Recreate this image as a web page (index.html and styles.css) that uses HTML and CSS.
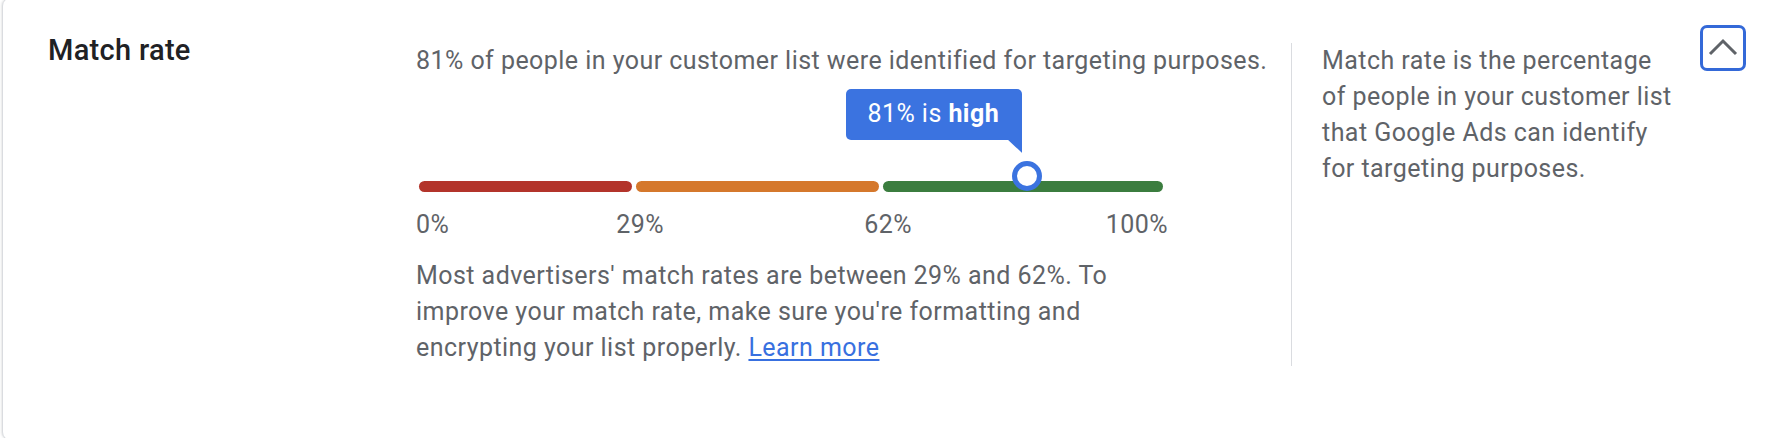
FILE: index.html
```html
<!DOCTYPE html>
<html lang="en">
<head>
<meta charset="utf-8">
<title>Match rate</title>
<link rel="stylesheet" href="styles.css">
</head>
<body>
<section class="card">
  <div class="row">
    <h2 class="title">Match rate</h2>
    <div class="main">
      <p class="lead">81% of people in your customer list were identified for targeting purposes.</p>
      <div class="scale">
        <div class="bar">
          <span class="seg seg-low" style="flex-grow:29"></span>
          <span class="seg seg-mid" style="flex-grow:33"></span>
          <span class="seg seg-high" style="flex-grow:38"></span>
        </div>
        <div class="marker" style="left:81%">
          <div class="tip">81% is <b>high</b></div>
          <span class="knob"></span>
        </div>
      </div>
      <div class="labels">
        <span class="label label-start">0%</span>
        <span class="label label-mid" style="left:29%">29%</span>
        <span class="label label-mid" style="left:62%">62%</span>
        <span class="label label-end">100%</span>
      </div>
      <p class="note">Most advertisers' match rates are between 29% and 62%. To improve your match rate, make sure you're formatting and encrypting your list properly. <a href="#" class="link">Learn more</a></p>
    </div>
    <aside class="side">
      <p class="side-text">Match rate is the percentage of people in your customer list that Google Ads can identify for targeting purposes.</p>
    </aside>
    <button class="toggle" type="button" aria-label="Collapse">
      <svg width="30" height="18" viewBox="0 0 30 18" aria-hidden="true"><polyline points="2,16 15,3 28,16" fill="none" stroke="#5f6368" stroke-width="3"/></svg>
    </button>
  </div>
</section>
</body>
</html>
```
FILE: styles.css
```css
html, body {
  margin: 0;
  padding: 0;
  background: #ffffff;
  overflow: hidden;
}
body {
  width: 1784px;
  height: 438px;
  font-family: Roboto, "Liberation Sans", Arial, sans-serif;
  color: #5f6368;
}
.card {
  box-sizing: border-box;
  margin: -3px 0 0 2px;
  width: 1800px;
  height: 444px;
  border: 1px solid #dadce0;
  border-radius: 9px;
  box-shadow: -1px 0 2px rgba(60, 64, 67, 0.12);
  background: #fff;
  padding: 45px 0 0 45px;
}
.row {
  display: flex;
  align-items: stretch;
}
.title {
  flex: 0 0 368px;
  margin: -11px 0 0 0;
  font-size: 29px;
  line-height: 36px;
  font-weight: 500;
  color: #202124;
  letter-spacing: 0.3px;
}
.main {
  flex: 0 0 875px;
}
.lead, .note, .side-text {
  margin: 0;
  font-size: 25px;
  line-height: 36px;
  letter-spacing: 0.45px;
}
.scale {
  position: relative;
  width: 752px;
  padding-top: 102px;
}
.bar {
  display: flex;
  gap: 4px;
  height: 11px;
  margin: 0 5px 0 3px;
}
.seg {
  flex-basis: 0;
  border-radius: 6px;
}
.seg-low { background: #b3342b; }
.seg-mid { background: #d5782c; }
.seg-high { background: #3b7d3f; }
.marker {
  position: absolute;
  top: 0;
  width: 0;
  height: 100%;
}
.tip {
  position: absolute;
  top: 10px;
  right: 3px;
  white-space: nowrap;
  background: #3b73e0;
  color: #fff;
  font-size: 25px;
  line-height: 36px;
  letter-spacing: 0.45px;
  padding: 7px 23px 8px 21px;
  border-radius: 5px 5px 0 5px;
}
.tip b { font-weight: 700; }
.tip::after {
  content: "";
  position: absolute;
  right: 0;
  top: 100%;
  width: 14px;
  height: 13px;
  background: #3b73e0;
  clip-path: polygon(0 0, 100% 0, 100% 100%);
}
.knob {
  position: absolute;
  top: 82px;
  left: -13px;
  box-sizing: border-box;
  width: 30px;
  height: 30px;
  border: 5px solid #3b73e0;
  border-radius: 50%;
  background: #fff;
}
.labels {
  position: relative;
  width: 752px;
  height: 36px;
  margin-top: 15px;
  font-size: 25px;
  line-height: 36px;
  letter-spacing: 0.45px;
}
.label {
  position: absolute;
  top: 0;
  white-space: nowrap;
}
.label-start { left: 0; }
.label-mid { transform: translateX(-50%); margin-left: 6px; }
.label-end { right: 0; }
.note {
  width: 752px;
  margin-top: 15px;
}
.link {
  color: #3870e0;
  text-decoration: underline;
  text-underline-offset: 3px;
}
.side {
  flex: 0 0 356px;
  border-left: 1px solid #dadce0;
  padding-left: 30px;
}
.toggle {
  box-sizing: border-box;
  flex: 0 0 46px;
  width: 46px;
  height: 46px;
  margin: -18px 0 0 22px;
  padding: 0;
  border: 3px solid #3469d8;
  border-radius: 7px;
  background: #fff;
  display: flex;
  align-items: center;
  justify-content: center;
}
.toggle svg { display: block; margin-top: -3px; }
```
